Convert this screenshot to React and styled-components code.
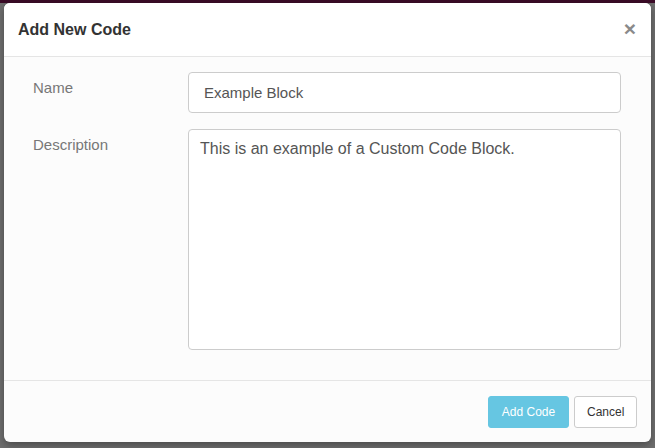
import React from "react";
import styled, { createGlobalStyle } from "styled-components";

const Global = createGlobalStyle`
  html, body { margin: 0; padding: 0; }
  body {
    width: 655px;
    height: 448px;
    overflow: hidden;
    background: #6f6f6f;
    font-family: "Helvetica Neue", "Liberation Sans", Arial, sans-serif;
  }
`;

const Backdrop = styled.div`
  width: 655px;
  height: 448px;
  box-sizing: border-box;
  background: #6f6f6f;
  border-top: 3px solid #3b0b27;
  padding: 0 4px 0 4px;
  display: flex;
  flex-direction: column;
`;

const Modal = styled.div`
  width: 647px;
  height: 439px;
  background: #fcfcfc;
  border-radius: 6px;
  box-shadow: 0 3px 9px rgba(0, 0, 0, 0.35);
  display: flex;
  flex-direction: column;
  overflow: hidden;
`;

const Header = styled.div`
  display: flex;
  align-items: center;
  justify-content: space-between;
  padding: 15px 15px 15px 14px;
  background: #fff;
  border-bottom: 1px solid #e5e5e5;
`;

const Title = styled.h4`
  margin: 0;
  font-size: 16px;
  line-height: 23px;
  font-weight: bold;
  color: #333;
`;

const Close = styled.button`
  border: 0;
  background: transparent;
  padding: 0;
  margin-top: -2px;
  font-family: "Liberation Sans", Arial, sans-serif;
  font-size: 21px;
  font-weight: bold;
  line-height: 1;
  color: #8a8a8a;
  cursor: pointer;
`;

const Body = styled.div`
  flex: 1;
  padding: 15px 30px 14px 29px;
  display: flex;
  flex-direction: column;
  gap: 16px;
`;

const Row = styled.div`
  display: grid;
  grid-template-columns: 155px 1fr;
  align-items: start;
`;

const Label = styled.label`
  font-size: 15px;
  line-height: 21px;
  color: #777;
  padding-top: ${(p) => p.$top}px;
`;

const Input = styled.div`
  height: 41px;
  box-sizing: border-box;
  border: 1px solid #ccc;
  border-radius: 4px;
  background: #fff;
  padding: 0 15px;
  display: flex;
  align-items: center;
  font-size: 15px;
  color: #555;
`;

const TextArea = styled.div`
  height: 221px;
  box-sizing: border-box;
  border: 1px solid #ccc;
  border-radius: 4px;
  background: #fff;
  padding: 8px 11px;
  font-size: 16px;
  line-height: 22px;
  color: #555;
`;

const Footer = styled.div`
  display: flex;
  justify-content: flex-end;
  gap: 5px;
  padding: 15px 14px 14px 15px;
  border-top: 1px solid #e5e5e5;
`;

const Button = styled.button`
  height: 32px;
  box-sizing: border-box;
  padding: 0 12px;
  border-radius: 3px;
  font-family: "Helvetica Neue", "Liberation Sans", Arial, sans-serif;
  font-size: 12px;
  border: 1px solid ${(p) => (p.$primary ? "#66c6e2" : "#ccc")};
  background: ${(p) => (p.$primary ? "#66c6e2" : "#fff")};
  color: ${(p) => (p.$primary ? "#fff" : "#333")};
  width: ${(p) => p.$w}px;
`;

export default function App() {
  return (
    <>
      <Global />
      <Backdrop>
        <Modal>
          <Header>
            <Title>Add New Code</Title>
            <Close>×</Close>
          </Header>
          <Body>
            <Row>
              <Label $top={5}>Name</Label>
              <Input>Example Block</Input>
            </Row>
            <Row>
              <Label $top={5}>Description</Label>
              <TextArea>This is an example of a Custom Code Block.</TextArea>
            </Row>
          </Body>
          <Footer>
            <Button $primary $w={81}>Add Code</Button>
            <Button $w={63}>Cancel</Button>
          </Footer>
        </Modal>
      </Backdrop>
    </>
  );
}
